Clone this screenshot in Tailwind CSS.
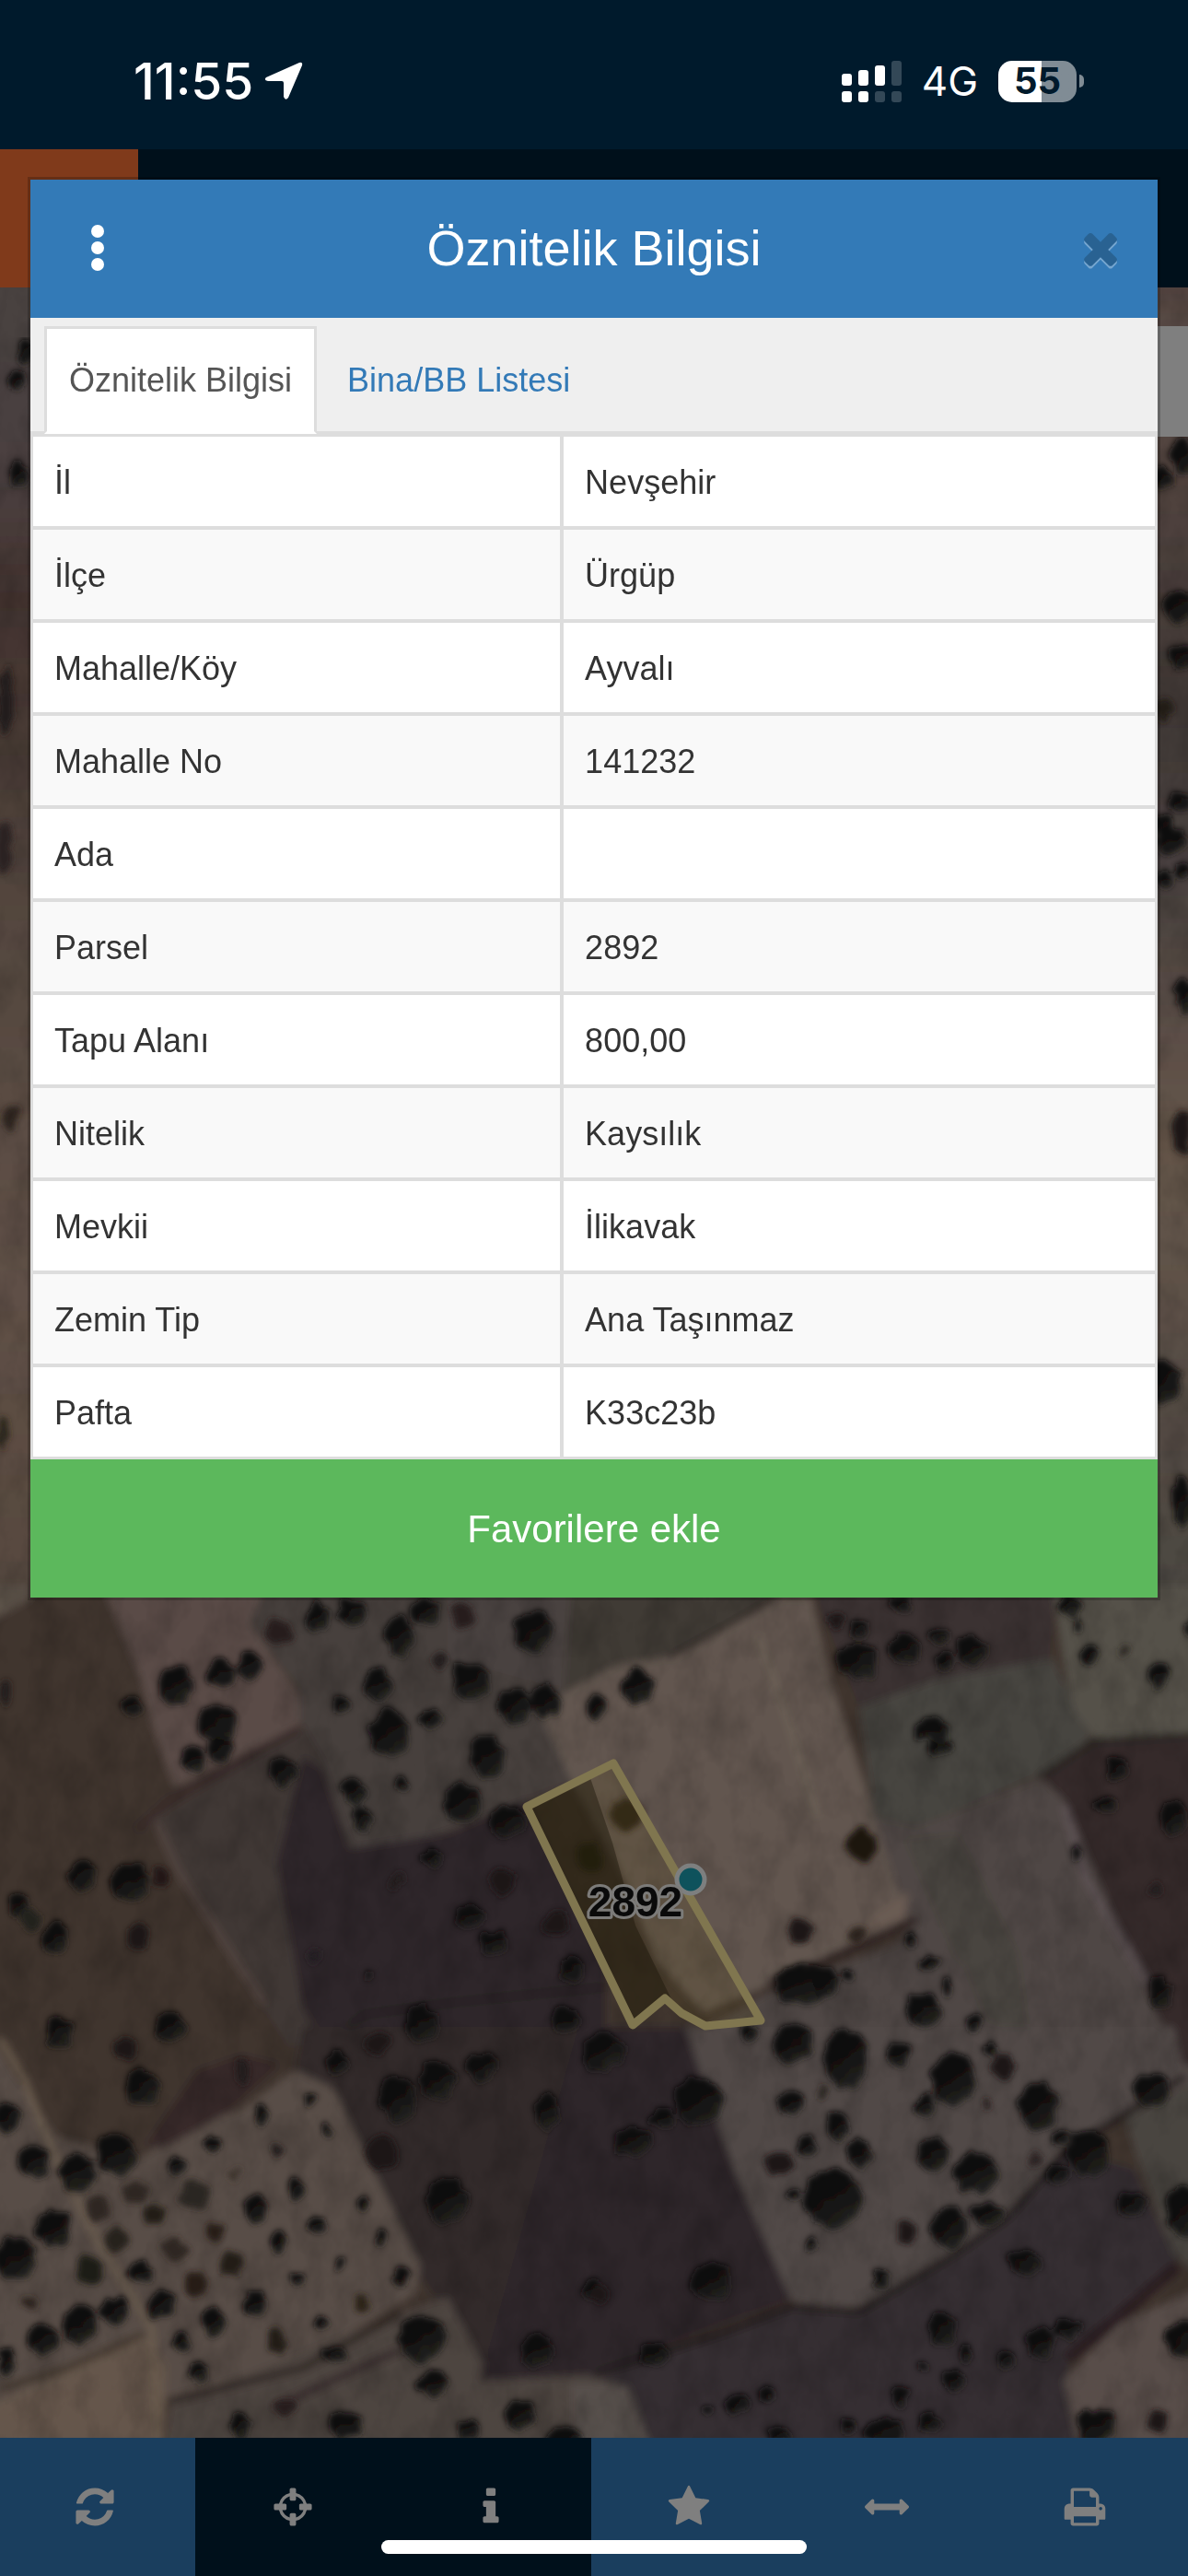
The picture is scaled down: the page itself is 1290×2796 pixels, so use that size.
<!DOCTYPE html>
<html lang="tr">
<head>
    <meta charset="UTF-8">
    <meta name="viewport" content="width=device-width, initial-scale=1.0">
    <title>Öznitelik Bilgisi</title>
    <script src="https://cdn.jsdelivr.net/npm/@tailwindcss/browser@4"></script>
</head>
<body class="relative min-h-screen flex flex-col bg-[#00101b] font-['Liberation_Sans',Arial,sans-serif] text-[36px] text-[#333]">

<!-- Status bar -->
<div class="h-[162px] pt-[14px] pl-[145px] pr-[113px] flex items-center justify-between bg-[#001a2c] text-white font-['Inter',sans-serif]">
    <div class="flex items-center gap-3">
        <span class="text-[55px] font-medium">11:55</span>
        <svg class="w-[42px] h-[42px]" viewBox="0 0 42 42" fill="#fff"><path d="M38 1q4-1 3 3L26 39q-3 4-5-1V23q0-2-2-2H4q-5-1-2-4z"/></svg>
    </div>
    <div class="flex items-center gap-[22px]">
        <svg class="w-[65px] h-[45px]" viewBox="0 0 65 45" fill="#fff">
            <rect y="14" width="11" height="13" rx="3"/>
            <rect x="18" y="10" width="11" height="17" rx="3"/>
            <rect x="36" y="5" width="11" height="22" rx="3"/>
            <rect x="54" width="11" height="27" rx="3" fill="#334857"/>
            <rect y="33" width="11" height="12" rx="3"/>
            <rect x="18" y="33" width="11" height="12" rx="3"/>
            <rect x="36" y="33" width="11" height="12" rx="3" fill="#334857"/>
            <rect x="54" y="33" width="11" height="12" rx="3" fill="#334857"/>
        </svg>
        <span class="text-[44px]">4G</span>
        <div class="flex items-center gap-[3px]">
            <div class="w-[85px] h-[45px] rounded-[15px] flex items-center justify-center bg-linear-to-r from-white from-55% to-[#808c95] to-55% text-[#001a2c] text-[40px] font-bold">55</div>
            <div class="w-[5px] h-[14px] rounded-r-full bg-[#808c95]"></div>
        </div>
    </div>
</div>

<header class="h-[150px] flex">
    <div class="w-[150px] bg-[#803a1b]"></div>
</header>

<!-- Map -->
<main class="relative flex-1 overflow-hidden bg-[#41342f]">
    <svg class="absolute inset-0 w-full h-full" viewBox="0 312 1290 2334" preserveAspectRatio="xMidYMid slice">
        <defs>
            <filter id="soft" x="0" y="0" width="1" height="1"><feGaussianBlur stdDeviation="4"/></filter>
            <filter id="treeSoft" x="0" y="0" width="1" height="1"><feTurbulence type="fractalNoise" baseFrequency=".07" numOctaves="2" result="n"/><feDisplacementMap in="SourceGraphic" in2="n" scale="14" xChannelSelector="R" yChannelSelector="G"/><feGaussianBlur stdDeviation="3"/></filter>
            <filter id="grain" x="0" y="0" width="1" height="1"><feTurbulence type="fractalNoise" baseFrequency=".03 .02" numOctaves="4"/><feColorMatrix values="0 0 0 0 0  0 0 0 0 0  0 0 0 0 0  1.6 0 0 0 -.62"/></filter>
            <linearGradient id="crown" x1=".2" y1="0" x2=".8" y2="1">
                <stop offset=".3" stop-color="#0c090a"/><stop offset="1" stop-color="#242521"/>
            </linearGradient>
            <linearGradient id="left" x2="0" y2="1">
                <stop offset="0" stop-color="#49433f"/><stop offset=".16" stop-color="#4b4040"/><stop offset=".25" stop-color="#42332f"/>
                <stop offset=".5" stop-color="#54473f"/><stop offset=".75" stop-color="#605147"/><stop offset="1" stop-color="#57493f"/>
            </linearGradient>
            <linearGradient id="right" x2="0" y2="1">
                <stop offset="0" stop-color="#5c4d47"/><stop offset=".15" stop-color="#52443f"/><stop offset=".32" stop-color="#403835"/>
                <stop offset=".45" stop-color="#4a4240"/><stop offset=".65" stop-color="#66564a"/><stop offset="1" stop-color="#4a4641"/>
            </linearGradient>
        </defs>

        <g filter="url(#soft)">
            <rect x="-20" y="290" width="1330" height="2380" fill="#41342f"/>
            <rect x="-20" y="290" width="120" height="1432" fill="url(#left)"/>
            <rect x="1200" y="290" width="110" height="1462" fill="url(#right)"/>
            <g transform="translate(0 1720) scale(.4114 .3333)">
                <path d="M-40 0H80V45L-40 130z" fill="#5f544b"/>
                <path d="M270 0H720L660 130L790 360V460L460 660L400 450L370 300z" fill="#5a4c46"/>
                <path d="M700 0H1600V350L1500 400L1520 640L1180 800L980 885L900 830L850 560L790 440V340L660 130z" fill="#47413c"/>
                <path d="M1180 0H1600V320L1450 330L1300 280L1180 240z" fill="#4a4240"/>
                <path d="M400 770L800 470L850 560L940 880L1050 1340L870 1500L760 1500L640 1270L480 950z" fill="#3f3735"/>
                <path d="M800 560L850 600L920 860L1180 810L1390 700L1600 1250V1500H860L800 1380L730 900z" fill="#2f2729"/>
                <path d="M400 740L470 930L700 1370" fill="none" stroke="#4f433e" stroke-width="22"/>
                <path d="M360 800L450 700L790 470" fill="none" stroke="#392c29" stroke-width="26"/>
                <path d="M870 1490L960 1400L1200 1360L1600 1310" fill="none" stroke="#211a1c" stroke-width="14"/>
            </g>
            <g transform="translate(645 1720) scale(.4114 .3333)">
                <path d="M-60 0H520L350 130L180 240L0 350L-80 400z" fill="#403a34"/>
                <path d="M-150 400L60 260L180 240L350 140L480 45H575L620 300L700 600L840 1080L600 1230L450 1310L290 1390L170 1230L60 900L-60 640z" fill="#62564f"/>
                <path d="M430 160L500 400L590 760" fill="none" stroke="#6b5e55" stroke-width="18"/>
                <path d="M575 0H1220L1200 260L900 310L700 400z" fill="#3a3230"/>
                <path d="M700 400L900 310L1210 240L1310 500L1180 620L850 790L740 760z" fill="#474540"/>
                <path d="M1210 0H1640V490L1320 500L1260 400z" fill="#555149"/>
                <path d="M1180 620L1330 510L1640 480V1520H1530L1380 1100L1240 700z" fill="#34292c"/>
                <path d="M740 760L850 790L1180 630L1240 700L1380 1100L1530 1520H1060L830 1100z" fill="#504744"/>
                <path d="M820 830L960 810L1120 1200L1150 1500L1020 1400z" fill="#48453f"/>
                <path d="M1240 720L1300 960L1460 1300" fill="none" stroke="#5c5152" stroke-width="22"/>
                <path d="M800 1170L840 1110L980 1240L1060 1500H240L300 1440L460 1330L600 1260z" fill="#504644"/>
                <path d="M850 1090L600 1230L460 1300" fill="none" stroke="#2e2320" stroke-width="26"/>
                <path d="M480 45L350 135L200 235" fill="none" stroke="#332b26" stroke-width="14"/>
                <path d="M1180 625L1320 510L1640 485" fill="none" stroke="#2b2523" stroke-width="20"/>
                <path d="M740 1080L830 1000L820 1080L700 1140z" fill="#6a5c52"/>
            </g>
            <g transform="translate(0 2200) scale(.4114 .3333)">
                <path d="M780 130L800 0H1700V1150L1300 1170L1100 800z" fill="#30292b"/>
                <path d="M-40 0L60 200L150 360L370 430L500 320L640 270L780 140L880 200L960 400L1110 780L1095 870L860 1040L440 1230L-40 1230z" fill="#584d46"/>
                <path d="M-40 1240L380 1010L440 1100L430 1440H-40z" fill="#65564c"/>
                <path d="M430 1440L450 1230L1060 930L1180 880L1300 1150L1650 1130V1440z" fill="#4e4541"/>
                <path d="M0 40L60 160L130 380L250 680L400 980L420 1340" fill="none" stroke="#6d5e50" stroke-width="14"/>
                <path d="M0 1180L180 1110L380 1000" fill="none" stroke="#41342c" stroke-width="20"/>
                <path d="M440 1220L800 1110L1060 930" fill="none" stroke="#2f2524" stroke-width="22"/>
                <path d="M720 1240L880 1150L1060 1050" fill="none" stroke="#352b2a" stroke-width="22"/>
                <path d="M520 140L640 90L740 120L600 280L440 390L380 390z" fill="#38292a"/>
            </g>
            <g transform="translate(645 2200) scale(.4114 .3333)">
                <path d="M-40 0H250L380 480L520 890L0 1120L-300 1150z" fill="#2f282a"/>
                <path d="M-40 1130L520 920L700 920L1100 620L1240 400L1420 460L1540 760L1250 1100L1290 1440H150L60 1160z" fill="#362f30"/>
                <path d="M240 0H1640V160L1380 290L1230 400L1090 620L940 740L780 880L640 930L520 890L370 470z" fill="#514946"/>
                <path d="M1530 0H1640V150L1550 120z" fill="#34292c"/>
                <path d="M1400 290L1640 160V860L1530 740L1440 450z" fill="#4a4541"/>
                <path d="M1290 1440L1240 1150L1380 970L1640 830V1440z" fill="#594e4a"/>
                <path d="M-60 1160L90 1170L170 1440H-60z" fill="#57504b"/>
                <path d="M0 1130L350 990L520 910L700 925L950 740L1090 620L1240 410L1560 160" fill="none" stroke="#231b1c" stroke-width="20"/>
                <path d="M1540 780L1380 950L1250 1080" fill="none" stroke="#2c1f22" stroke-width="34"/>
            </g>
        </g>
        <rect y="312" width="1290" height="2334" filter="url(#grain)" opacity=".2"/>
        <g id="trees" filter="url(#treeSoft)" fill="url(#crown)"></g>

        <!-- white control box under the backdrop -->
        <rect x="1200" y="354" width="90" height="120" fill="#7f7f7f"/>

        <!-- Parcel -->
        <path d="M572 1961L666 1914L826 2193L766 2199L740 2185L722 2169L687 2198z" fill="#5a4a18" fill-opacity=".2"/>
        <path d="M572 1961L640 1927L665 2000L690 2090L735 2182L722 2169L687 2198z" fill="#1c160a" fill-opacity=".45"/>
        <path d="M572 1961L666 1914L826 2193L766 2199L740 2185L722 2169L687 2198z" fill="none" stroke="#80764f" stroke-width="9" stroke-linejoin="round"/>
        <circle cx="750" cy="2040" r="15" fill="#0e525c" stroke="#7d7f7f" stroke-width="5"/>
        <text x="690" y="2080" text-anchor="middle" font-size="46" font-weight="700" fill="#0a0a0a" stroke="#7c7b79" stroke-width="6" stroke-linejoin="round" paint-order="stroke">2892</text>
    </svg>
</main>

<!-- Toolbar -->
<nav class="relative h-[150px] bg-[#1a3e5e] text-[#7f7f7f]">
    <div class="h-full grid grid-cols-6 -ml-[3px] mr-[3px]">
        <button type="button" aria-label="Yenile" class="pr-[3px] flex items-center justify-center">
            <svg class="size-12" viewBox="0 0 1792 1792" fill="currentColor"><path d="M1639 1056q0 5-1 7-64 268-268 434.500t-478 166.500q-146 0-282.500-55t-243.500-157l-129 129q-19 19-45 19t-45-19-19-45v-448q0-26 19-45t45-19h448q26 0 45 19t19 45-19 45l-137 137q71 66 161 102t187 36q134 0 250-65t186-179q11-17 53-117 8-23 30-23h192q13 0 22.500 9.500t9.500 22.500zm25-800v448q0 26-19 45t-45 19h-448q-26 0-45-19t-19-45 19-45l138-138q-148-137-349-137-134 0-250 65t-186 179q-11 17-53 117-8 23-30 23h-199q-13 0-22.500-9.500t-9.500-22.500v-7q65-268 270-434.500t480-166.500q146 0 284 55.500t245 156.500l130-129q19-19 45-19t45 19 19 45z"/></svg>
        </button>
        <button type="button" aria-label="Konumum" class="pr-[3px] flex items-center justify-center bg-[#00101b]">
            <svg class="size-12" viewBox="0 0 1792 1792" fill="currentColor"><path d="M1325 1024h-109q-26 0-45-19t-19-45v-128q0-26 19-45t45-19h109q-32-108-112.500-188.500t-188.500-112.500v109q0 26-19 45t-45 19h-128q-26 0-45-19t-19-45v-109q-108 32-188.500 112.500t-112.500 188.500h109q26 0 45 19t19 45v128q0 26-19 45t-45 19h-109q32 108 112.500 188.500t188.500 112.500v-109q0-26 19-45t45-19h128q26 0 45 19t19 45v109q108-32 188.500-112.500t112.500-188.500zm339-192v128q0 26-19 45t-45 19h-143q-37 161-154.500 278.500t-278.500 154.500v143q0 26-19 45t-45 19h-128q-26 0-45-19t-19-45v-143q-161-37-278.500-154.500t-154.500-278.500h-143q-26 0-45-19t-19-45v-128q0-26 19-45t45-19h143q37-161 154.500-278.500t278.500-154.500v-143q0-26 19-45t45-19h128q26 0 45 19t19 45v143q161 37 278.500 154.500t154.500 278.500h143q26 0 45 19t19 45z"/></svg>
        </button>
        <button type="button" aria-label="Bilgi" class="pr-[3px] flex items-center justify-center bg-[#00101b]">
            <svg class="size-12" viewBox="0 0 1792 1792" fill="currentColor"><path d="M1216 1344v128q0 26-19 45t-45 19h-512q-26 0-45-19t-19-45v-128q0-26 19-45t45-19h64v-384h-64q-26 0-45-19t-19-45v-128q0-26 19-45t45-19h384q26 0 45 19t19 45v576h64q26 0 45 19t19 45zm-128-1152v192q0 26-19 45t-45 19h-256q-26 0-45-19t-19-45v-192q0-26 19-45t45-19h256q26 0 45 19t19 45z"/></svg>
        </button>
        <button type="button" aria-label="Favoriler" class="pr-[3px] flex items-center justify-center">
            <svg class="size-12" viewBox="0 0 1792 1792" fill="currentColor"><path d="M1728 647q0 22-26 48l-363 354 86 500q1 7 1 20 0 21-10.500 35.500t-30.500 14.500q-19 0-40-12l-449-236-449 236q-22 12-40 12-21 0-31.500-14.500t-10.500-35.500q0-6 2-20l86-500-364-354q-25-27-25-48 0-37 56-46l502-73 225-455q19-41 49-41t49 41l225 455 502 73q56 9 56 46z"/></svg>
        </button>
        <button type="button" aria-label="Ölçüm" class="pr-[3px] flex items-center justify-center">
            <svg class="size-12" viewBox="0 0 1792 1792" fill="currentColor"><path d="M1792 896q0 26-19 45l-256 256q-19 19-45 19t-45-19-19-45v-128h-1024v128q0 26-19 45t-45 19-45-19l-256-256q-19-19-19-45t19-45l256-256q19-19 45-19t45 19 19 45v128h1024v-128q0-26 19-45t45-19 45 19l256 256q19 19 19 45z"/></svg>
        </button>
        <button type="button" aria-label="Yazdır" class="pr-[3px] flex items-center justify-center">
            <svg class="size-12" viewBox="0 0 1792 1792" fill="currentColor"><path d="M448 1536h896v-256h-896v256zm0-640h896v-384h-160q-40 0-68-28t-28-68v-160h-640v640zm1152 64q0-26-19-45t-45-19-45 19-19 45 19 45 45 19 45-19 19-45zm128 0v416q0 13-9.500 22.500t-22.500 9.500h-224v160q0 40-28 68t-68 28h-960q-40 0-68-28t-28-68v-160h-224q-13 0-22.500-9.500t-9.500-22.500v-416q0-79 56.500-135.500t135.500-56.500h64v-544q0-40 28-68t68-28h672q40 0 88 20t76 48l152 152q28 28 48 76t20 88v256h64q79 0 135.500 56.500t56.500 135.500z"/></svg>
        </button>
    </div>
    <!-- home indicator -->
    <div class="absolute bottom-6 left-1/2 -translate-x-1/2 w-[462px] h-[15px] rounded-full bg-white"></div>
</nav>

<!-- Modal -->
<section role="dialog" aria-labelledby="modalTitle" class="absolute inset-x-[33px] top-[195px] bg-white ring-3 ring-black/20">
    <div class="h-[150px] pb-[2px] pl-[42px] pr-11 flex items-center justify-between bg-[#337ab7] text-white">
        <button type="button" aria-label="Menü" class="w-[62px] flex justify-center">
            <svg class="w-4 h-[52px]" viewBox="0 0 16 52" fill="#fff"><circle cx="8" cy="8" r="7"/><circle cx="8" cy="26" r="7"/><circle cx="8" cy="44" r="7"/></svg>
        </button>
        <h1 id="modalTitle" class="text-[54px]">Öznitelik Bilgisi</h1>
        <button type="button" aria-label="Kapat" class="w-[60px] flex justify-end">
            <svg class="w-[54px] h-[54px] -mr-[9px]" viewBox="0 0 1792 1792">
                <path transform="translate(0 90)" fill="#75a6d0" d="M1490 1322q0 40-28 68l-136 136q-28 28-68 28t-68-28l-294-294-294 294q-28 28-68 28t-68-28l-136-136q-28-28-28-68t28-68l294-294-294-294q-28-28-28-68t28-68l136-136q28-28 68-28t68 28l294 294 294-294q28-28 68-28t68 28l136 136q28 28 28 68t-28 68l-294 294 294 294q28 28 28 68z"/>
                <path fill="#296292" d="M1490 1322q0 40-28 68l-136 136q-28 28-68 28t-68-28l-294-294-294 294q-28 28-68 28t-68-28l-136-136q-28-28-28-68t28-68l294-294-294-294q-28-28-28-68t28-68l136-136q28-28 68-28t68 28l294 294 294-294q28-28 68-28t68 28l136 136q28 28 28 68t-28 68l-294 294 294 294q28 28 28 68z"/>
            </svg>
        </button>
    </div>

    <div class="h-[126px] pt-[9px] pl-[15px] flex gap-[6px] bg-[#efefef] border-b-3 border-[#ddd]">
        <a href="#oznitelik" class="h-[117px] px-6 flex items-center bg-white border-3 border-[#ddd] border-b-white text-[#555]">Öznitelik Bilgisi</a>
        <a href="#bina" class="h-[117px] px-6 flex items-center border-3 border-transparent text-[#337ab7]">Bina/BB Listesi</a>
    </div>

    <table id="oznitelik" class="w-full table-fixed border-separate border-spacing-0 border-3 border-b-0 border-[#ddd] text-left">
        <tbody id="rows"></tbody>
    </table>

    <button type="button" class="block w-full h-[150px] bg-[#5cb85c] text-white text-[42px]">Favorilere ekle</button>
</section>

<script>
    const attributes = [
        ['İl', 'Nevşehir'],
        ['İlçe', 'Ürgüp'],
        ['Mahalle/Köy', 'Ayvalı'],
        ['Mahalle No', '141232'],
        ['Ada', ''],
        ['Parsel', '2892'],
        ['Tapu Alanı', '800,00'],
        ['Nitelik', 'Kaysılık'],
        ['Mevkii', 'İlikavak'],
        ['Zemin Tip', 'Ana Taşınmaz'],
        ['Pafta', 'K33c23b']
    ];

    document.getElementById('rows').innerHTML = attributes.map(([label, value]) => `
        <tr class="group h-[101px] last:h-[100px] even:bg-[#f9f9f9]">
            <th scope="row" class="w-[47.3%] px-[23px] pt-[3px] font-normal border-r-4 border-b-4 group-last:border-b-3 border-[#ddd]">${label}</th>
            <td class="px-[23px] pt-[3px] border-b-4 group-last:border-b-3 border-[#ddd]">${value}</td>
        </tr>`).join('');

    // trees per map tile: x, y, rx, ry
    const tiles = [
        { at: 'translate(3 1723) scale(.4114 .3333)', trees: [
            [458,315,48,66],[575,280,40,56],[650,255,36,50],[343,383,30,36],[565,440,54,72],[572,530,36,46],[500,560,36,48],[738,600,38,46],
            [728,145,36,44,'#261a1a'],[830,95,32,52],[920,80,38,50],[1045,160,38,72],[1115,80,36,48],[1218,90,30,44,'#281b1b'],[1400,145,54,76],[990,315,38,58],
            [898,378,28,28],[1020,475,56,84],[1130,425,32,38],[1235,305,56,66],[1350,385,48,66],[1435,370,46,56],[1278,550,50,76],[925,665,36,48],
            [1055,640,20,26],[948,755,26,44],[1212,700,52,72],[1335,760,46,56],[1132,880,34,36],[1315,960,34,48,'#1a1315'],[1230,1070,46,40],[1290,1155,42,40],
            [1460,1090,38,44,'#1a1315'],[1505,1240,34,42],[1105,1420,48,64],[1485,1410,38,42],[965,1265,16,28],[210,935,40,52],[335,960,56,70],[418,940,24,40,'#201817'],
            [40,1030,26,44],[75,1080,28,40,'#22211e'],[138,1140,36,54],[358,1140,36,46,'#1e1618'],[148,1445,38,52],[440,1430,44,54],[1550,880,36,52,'#1c1a10'],[5,340,14,50,'#201c1a'],
            [1155,235,22,34,'#231a1b'],[1040,955,20,24,'#241c1e'],[1565,385,26,36],[820,1200,22,26,'#241e20']
        ]},
        { at: 'translate(648 1723) scale(.4114 .3333)', trees: [
            [105,322,44,60],[0,390,24,48],[82,740,44,54,'#2c2115'],[685,240,58,62],[810,200,44,50],[690,135,28,28],[900,155,36,28],[990,205,44,54],[912,240,26,32],
            [885,465,50,40],[905,520,32,30],[700,838,44,54,'#1c1211'],[538,1115,34,42,'#1e1512'],[685,1130,22,30,'#2c201a'],[540,1290,74,76],[605,1290,34,50],[832,1148,24,28],[880,1222,26,30],
            [922,1305,18,34],[860,1375,48,60],[660,1262,16,22],[995,1418,24,30],[1300,220,24,38],[1485,285,32,44],[1268,125,14,28],[1388,205,12,20,'#2c2824'],[1370,590,24,44],
            [1340,705,30,26],[1522,750,38,58],[1265,862,16,28],[1488,1315,32,54],[1475,980,18,26,'#211a1d'],[800,55,28,34],[630,105,24,34,'#1d1918'],[1245,60,38,36],[1565,130,14,26],[400,1450,34,30]
        ]},
        { at: 'translate(3 2203) scale(.4114 .3333)', trees: [
            [325,65,32,42,'#1d1518'],[365,185,50,62],[10,285,34,54],[80,430,44,56],[195,465,52,62],[300,405,56,74],[350,530,34,36,'#2e2820'],[250,580,36,42,'#2e2820'],[135,650,52,68],
            [395,605,32,34,'#211d15'],[300,685,34,42,'#26211a'],[35,745,60,74],[228,785,40,48,'#1f1a13'],[365,790,36,38],[455,715,34,42,'#2f2720'],[505,535,40,50,'#292520'],[457,443,26,28],[552,370,22,32],[682,275,22,36],
            [808,222,14,24],[855,322,14,24],[722,392,18,26,'#241c1a'],[612,472,12,22,'#3a332c'],[773,518,22,36],[668,583,34,48],[950,562,16,24],[830,635,22,32],[558,655,28,30,'#261f18'],
            [727,690,22,38],[1000,675,18,26],[605,765,34,44,'#221d18'],[888,760,14,22],[777,810,20,28],[508,825,32,38,'#251e18'],[1052,800,20,28],[668,888,34,46],[415,895,40,48],[295,915,42,46],[948,888,16,26,'#2a2319'],
            [555,950,34,44],[205,960,50,70],[70,885,22,22,'#2c221c'],[105,1010,46,52],[840,952,18,24],[722,1008,30,44,'#211d19'],[470,1015,28,34],[515,1110,26,40],[10,1080,24,56],[870,1055,38,26],[1105,1005,66,78],
            [1138,1152,42,46],[625,1285,30,40],[905,1285,50,48],[1362,1255,42,56],[1230,1300,34,36],[1480,1330,54,36],[745,1230,30,28,'#281e1f'],[1408,1045,48,56],[1172,555,60,76],[1040,225,50,84],[1145,165,50,70],
            [1265,120,42,50],[885,108,36,38],[1435,265,38,64],[1000,400,46,56,'#1c1315'],[988,45,34,42,'#1c1315'],[1555,845,22,32],[632,140,20,44,'#241a1a']
        ]},
        { at: 'translate(648 2203) scale(.4114 .3333)', trees: [
            [15,70,56,66],[268,235,70,82],[175,290,34,36],[95,360,52,48],[518,45,58,72],[655,95,60,104],[798,80,30,44],[940,160,60,90],[1072,118,30,46,'#1c1314'],[1038,65,14,26],[512,240,36,44],
            [592,195,12,26,'#28211e'],[635,315,32,50],[692,405,34,50],[553,380,24,36],[480,435,38,40,'#1c1213'],[622,550,80,104],[518,535,20,20],[865,245,26,38],[885,405,46,56],[1000,465,60,68],[1165,250,54,84],
            [1298,400,62,78],[1215,470,30,36],[1225,350,24,30],[930,645,52,72],[1030,600,46,44],[818,660,28,42,'#1e1213'],[750,808,24,34],[565,692,14,22],[300,820,58,68],[1130,755,46,44],[1410,565,40,46],[1550,590,52,92],
            [1465,195,50,60],[908,975,38,60],[1170,1020,40,54],[1242,975,40,36],[1080,1075,28,34],[975,1055,18,30],[945,1138,28,34],[150,1055,40,36],[370,1220,34,34],[447,1190,20,26],[290,1242,20,22],[480,1320,34,34],
            [760,1310,56,46],[662,1288,24,26],[880,1275,30,32],[800,1195,24,32],[1318,1290,54,60],[1480,1275,26,38,'#1e1615'],[1545,1005,46,66],[1155,422,16,26,'#2c2020'],[1030,242,14,22,'#251b1a'],[10,860,24,34,'#1d1517'],[865,1095,16,24]
        ]},
        // strips beside the dialog
        { at: 'translate(0 0)', trees: [
            [28,380,10,14],[17,412,9,12],[20,515,12,16],[6,760,9,40,'#221b1a'],[4,920,10,30,'#2b2320'],[12,1215,7,14,'#29231d'],[4,1555,7,20,'#2c251d'],[1284,495,14,22],[1262,520,12,12],
            [1280,658,18,18],[1284,712,16,12],[1264,770,12,12,'#241c17'],[1282,870,14,9],[1264,895,12,14],[1272,912,18,16],[1284,945,10,10],[1264,955,10,12],[1286,1080,12,22],[1284,1230,12,24,'#1d1816'],[1264,1500,18,26],[1284,1630,12,30]
        ]}
    ];

    const svgNS = 'http://www.w3.org/2000/svg';
    const treeLayer = document.getElementById('trees');
    tiles.forEach(({ at, trees }) => {
        const group = document.createElementNS(svgNS, 'g');
        group.setAttribute('transform', at);
        trees.forEach(([cx, cy, rx, ry, fill]) => {
            const tree = document.createElementNS(svgNS, 'ellipse');
            const size = { cx, cy, rx: rx * 0.93, ry: ry * 0.93 };
            Object.entries(size).forEach(([key, value]) => tree.setAttribute(key, value));
            if (fill) tree.setAttribute('fill', fill);
            group.appendChild(tree);
        });
        treeLayer.appendChild(group);
    });
</script>
</body>
</html>
